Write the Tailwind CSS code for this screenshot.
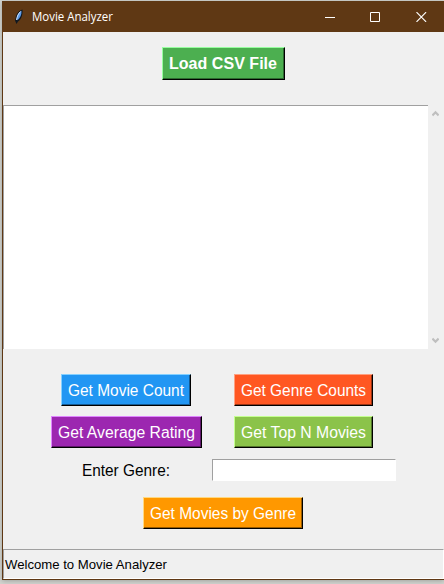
<!DOCTYPE html>
<html lang="en">
<head>
<meta charset="utf-8">
<title>Movie Analyzer</title>
<script src="https://cdn.jsdelivr.net/npm/@tailwindcss/browser@4"></script>
</head>
<body class="w-[444px] h-[584px] overflow-hidden bg-[#d3d5d0] pl-[2px] pt-px font-['Liberation_Sans',Arial,sans-serif]">
<div class="w-[442px] h-[579px] flex flex-col bg-[#f0f0f0] border-l border-b border-[#5f3814] shadow-[0_1px_5px_rgba(0,0,0,0.25)]">
  <header class="h-[31px] shrink-0 bg-[#5f3814] flex items-center text-white">
    <svg class="ml-[11px] w-[10px] h-[16px] shrink-0" viewBox="0 0 10 16">
      <path d="M8.500.5C5 1.500 2 5 1.600 9L1 11.500l1.500 3.500L4 12.500C7 11 9 6 8.500.5z" fill="#101820"/>
      <path d="M7.500 1.800C5 3 3 6 2.800 9.500l.7 1.800C6.200 9 7.800 5.500 7.500 1.800z" fill="#5b9bea"/>
      <path d="M6.500 2.500C4.500 4.500 3 7 2.500 11" stroke="#e4f0ff" stroke-width=".9" fill="none"/>
    </svg>
    <h1 class="ml-[8px] w-[90px] whitespace-nowrap font-['Open_Sans','Noto_Sans',sans-serif] text-[12px] leading-[16px]"><svg class="block w-[82px] h-[18px] overflow-visible"><text x="0" y="13" textLength="81" lengthAdjust="spacingAndGlyphs" fill="#fff">Movie Analyzer</text></svg></h1>
    <div class="ml-auto mr-[17px] flex items-center">
      <svg class="w-[10px] h-[10px]" viewBox="0 0 10 10"><path d="M0 5.500h10" stroke="#fff"/></svg>
      <svg class="ml-[35px] w-[10px] h-[10px]" viewBox="0 0 10 10"><path d="M.5.5h9v9h-9z" fill="none" stroke="#fff"/></svg>
      <svg class="ml-[36px] w-[11px] h-[10px]" viewBox="0 0 11 10"><path d="M.5.2l9.600 9.600M10.100.2l-9.600 9.600" stroke="#fff" stroke-width="1.200"/></svg>
    </div>
  </header>

  <button class="mt-[15px] ml-[159px] w-[123px] h-[33px] shrink-0 bg-[#4caf50] text-white font-bold text-[16px] leading-none border border-t-[#98ffa0] border-l-[#98ffa0] border-r-black border-b-black shadow-[inset_-1px_-1px_0_#2d6930]"><svg class="block mx-auto w-[109px] h-[21px] overflow-visible"><text x="0" y="16" textLength="108" fill="#fff">Load CSV File</text></svg></button>

  <div class="mt-[25px] h-[244px] shrink-0 flex">
    <div class="w-[425px] bg-white border-t border-l border-[#a0a0a0]"></div>
    <div class="flex-1 flex flex-col justify-between pl-[4px] pt-[5px] pb-[5px]">
      <svg class="w-[7px] h-[7px]" viewBox="0 0 7 7"><path d="M.4 5.500L3.500 2.300l3.100 3.200" fill="none" stroke="#bfbfbf" stroke-width="2.200"/></svg>
      <svg class="w-[7px] h-[7px]" viewBox="0 0 7 7"><path d="M.4 1.500L3.500 4.700l3.100-3.200" fill="none" stroke="#bfbfbf" stroke-width="2.200"/></svg>
    </div>
  </div>

  <div class="mt-[25px] ml-[48px] grid grid-cols-[151px_184px] gap-x-[10px] gap-y-[10px] shrink-0 items-center">
    <button class="ml-[10px] w-[130px] h-[32px] bg-[#2196f3] text-[16px] border border-t-[#84d0ff] border-l-[#84d0ff] border-r-black border-b-black shadow-[inset_-1px_-1px_0_#145a92]"><svg class="block mx-auto w-[116px] h-[20px] overflow-visible"><text x="0" y="16" textLength="116" lengthAdjust="spacingAndGlyphs" fill="#fff">Get Movie Count</text></svg></button>
    <button class="ml-[22px] w-[139px] h-[32px] bg-[#ff5722] text-[16px] border border-t-[#ffa080] border-l-[#ffa080] border-r-black border-b-black shadow-[inset_-1px_-1px_0_#993414]"><svg class="block mx-auto w-[125px] h-[20px] overflow-visible"><text x="0" y="16" textLength="125" lengthAdjust="spacingAndGlyphs" fill="#fff">Get Genre Counts</text></svg></button>
    <button class="w-[151px] h-[32px] bg-[#9c27b0] text-[16px] border border-t-[#df86ff] border-l-[#df86ff] border-r-black border-b-black shadow-[inset_-1px_-1px_0_#5e176a]"><svg class="block mx-auto w-[137px] h-[20px] overflow-visible"><text x="0" y="16" textLength="137" lengthAdjust="spacingAndGlyphs" fill="#fff">Get Average Rating</text></svg></button>
    <button class="ml-[22px] w-[139px] h-[32px] bg-[#8bc34a] text-[16px] border border-t-[#c5ff90] border-l-[#c5ff90] border-r-black border-b-black shadow-[inset_-1px_-1px_0_#53752c]"><svg class="block mx-auto w-[125px] h-[20px] overflow-visible"><text x="0" y="16" textLength="125" lengthAdjust="spacingAndGlyphs" fill="#fff">Get Top N Movies</text></svg></button>
    <label for="genre" class="mt-px ml-[31px] text-[16px] text-black"><svg class="block w-[88px] h-[22px] overflow-visible"><text x="0" y="17" textLength="88" lengthAdjust="spacingAndGlyphs">Enter Genre:</text></svg></label>
    <input id="genre" class="mt-px w-[184px] h-[22px] bg-white border border-t-[#a0a0a0] border-l-[#a0a0a0] border-r-white border-b-white">
  </div>

  <button class="mt-[16px] ml-[140px] w-[160px] h-[32px] shrink-0 bg-[#ff9800] text-[16px] border border-t-[#ffd980] border-l-[#ffd980] border-r-black border-b-black shadow-[inset_-1px_-1px_0_#995b00]"><svg class="block mx-auto w-[146px] h-[20px] overflow-visible"><text x="0" y="16" textLength="146" lengthAdjust="spacingAndGlyphs" fill="#fff">Get Movies by Genre</text></svg></button>

  <footer class="mt-auto h-[30px] shrink-0 border border-t-[#a0a0a0] border-l-[#a0a0a0] border-r-white border-b-white text-[13px] text-black pl-px"><svg class="block w-[163px] h-[28px] overflow-visible"><text x="0" y="19" textLength="162" lengthAdjust="spacingAndGlyphs">Welcome to Movie Analyzer</text></svg></footer>
</div>
</body>
</html>
